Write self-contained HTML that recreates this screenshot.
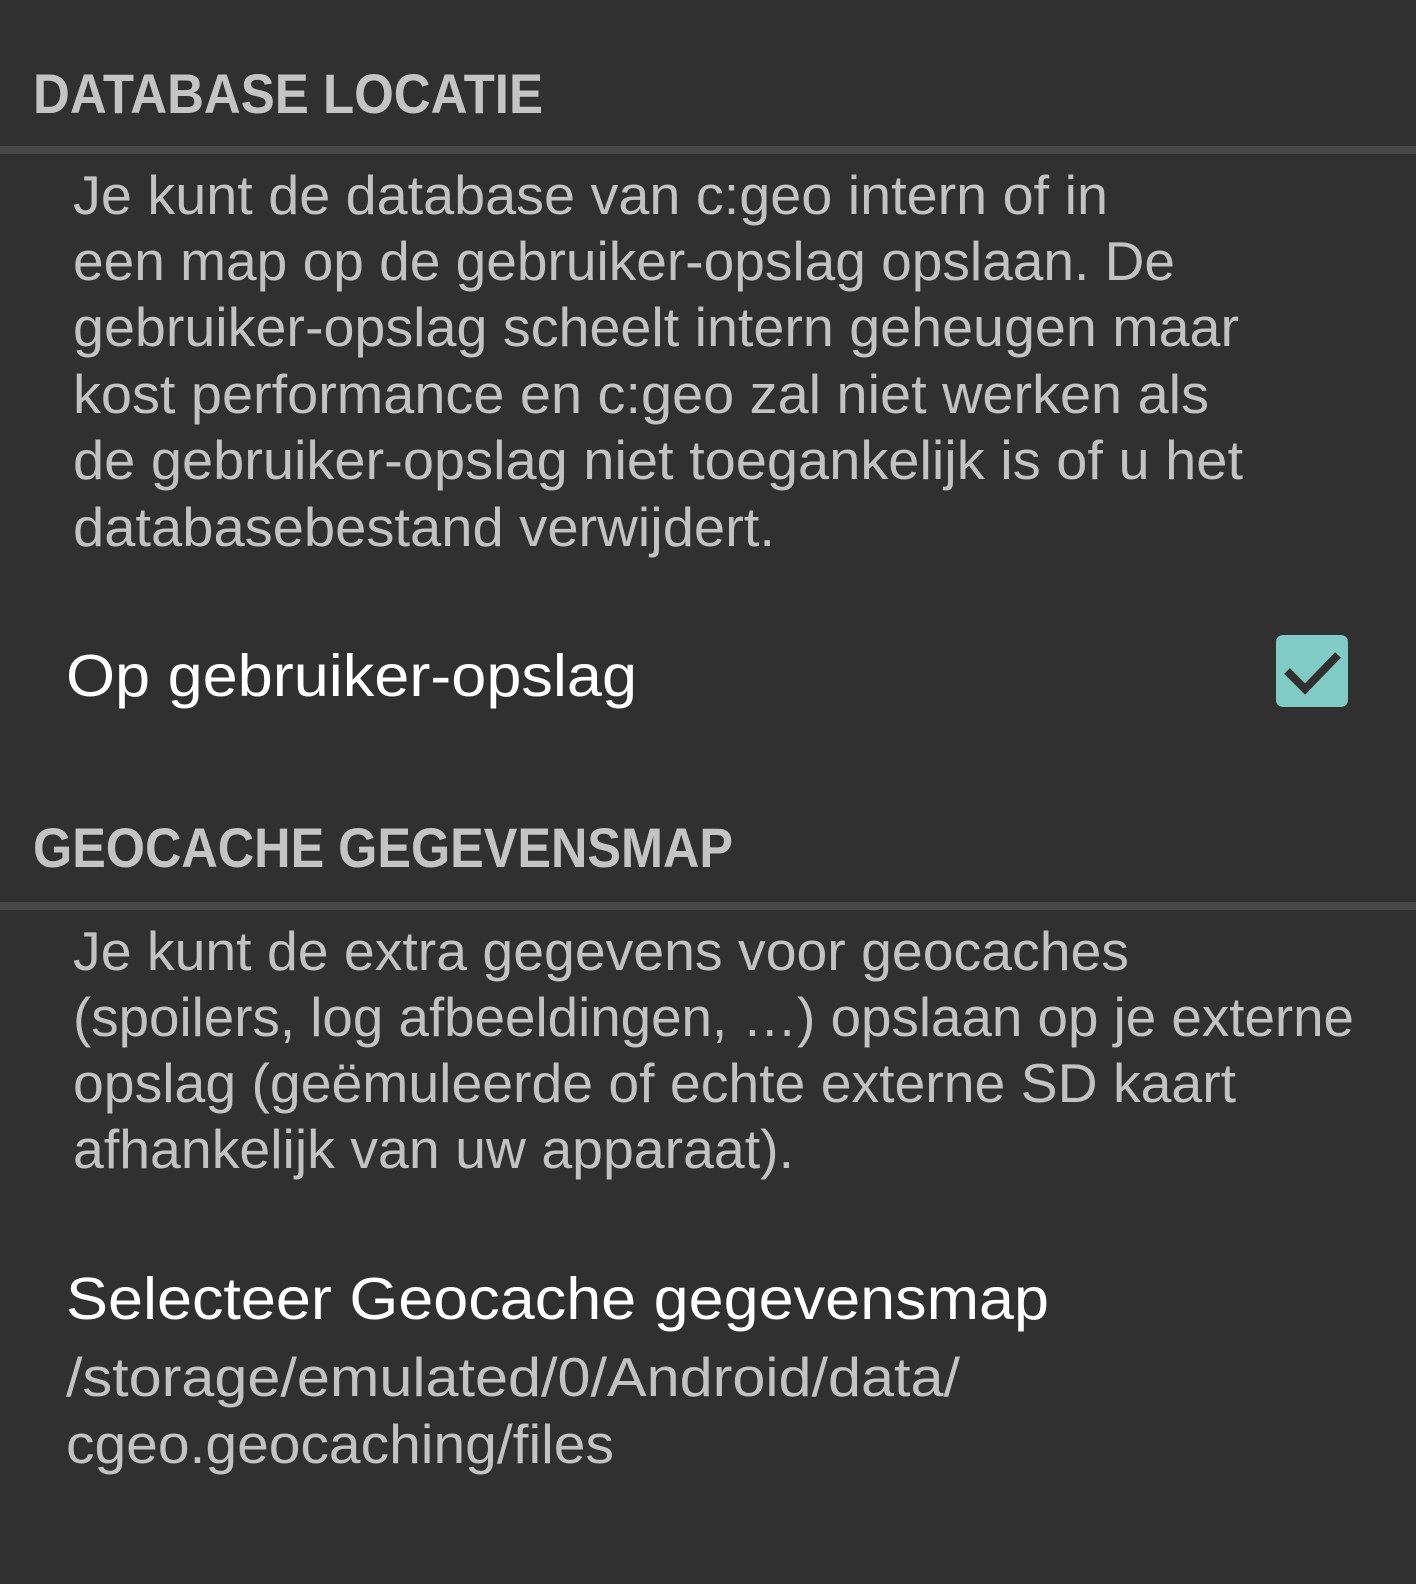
<!DOCTYPE html>
<html><head><meta charset="utf-8"><style>
html,body{margin:0;padding:0;background:#303030;width:1416px;height:1584px;overflow:hidden}
.t{position:absolute;white-space:nowrap;line-height:1;font-family:"Liberation Sans",sans-serif;transform-origin:0 0}
.h{font-weight:bold;font-size:56px;color:#c4c4c4}
.p{font-size:55px;color:#c2c2c2}
.w{font-size:59px;color:#ffffff}
.div{position:absolute;left:0;width:1416px;height:8px;background:#484848}
</style></head><body>
<div class="t h" style="left:33px;top:66px">DATABASE LOCATIE</div>
<div class="div" style="top:146px"></div>
<div class="t p" style="left:73px;top:168px">Je kunt de database van c:geo intern of in</div>
<div class="t p" style="left:73px;top:234px">een map op de gebruiker-opslag opslaan. De</div>
<div class="t p" style="left:73px;top:300px">gebruiker-opslag scheelt intern geheugen maar</div>
<div class="t p" style="left:73px;top:367px">kost performance en c:geo zal niet werken als</div>
<div class="t p" style="left:73px;top:433px">de gebruiker-opslag niet toegankelijk is of u het</div>
<div class="t p" style="left:73px;top:500px">databasebestand verwijdert.</div>
<div class="t w" style="left:66px;top:647px">Op gebruiker-opslag</div>
<svg style="position:absolute;left:1276px;top:635px" width="72" height="72" viewBox="0 0 72 72">
<rect width="72" height="72" rx="7" fill="#80cbc4"/>
<path d="M11 36 L29 54 L62 20" stroke="#303030" stroke-width="8" fill="none"/>
</svg>
<div class="t h" style="left:33px;top:820px">GEOCACHE GEGEVENSMAP</div>
<div class="div" style="top:902px"></div>
<div class="t p" style="left:73px;top:924px">Je kunt de extra gegevens voor geocaches</div>
<div class="t p" style="left:73px;top:990px">(spoilers, log afbeeldingen, …) opslaan op je externe</div>
<div class="t p" style="left:73px;top:1056px">opslag (geëmuleerde of echte externe SD kaart</div>
<div class="t p" style="left:73px;top:1122px">afhankelijk van uw apparaat).</div>
<div class="t w" style="left:66px;top:1270px">Selecteer Geocache gegevensmap</div>
<div class="t p" style="left:66px;top:1350px">/storage/emulated/0/Android/data/</div>
<div class="t p" style="left:66px;top:1417px">cgeo.geocaching/files</div>
<script>
var W=[510,1035,1102,1166,1136,1170,702,571,700,1056,1281,1163,721,983,894,548];
var els=document.querySelectorAll('.t');
for(var i=0;i<els.length;i++){var w=els[i].getBoundingClientRect().width;if(w>0)els[i].style.transform='scaleX('+(W[i]/w)+')';}
</script>
</body></html>
